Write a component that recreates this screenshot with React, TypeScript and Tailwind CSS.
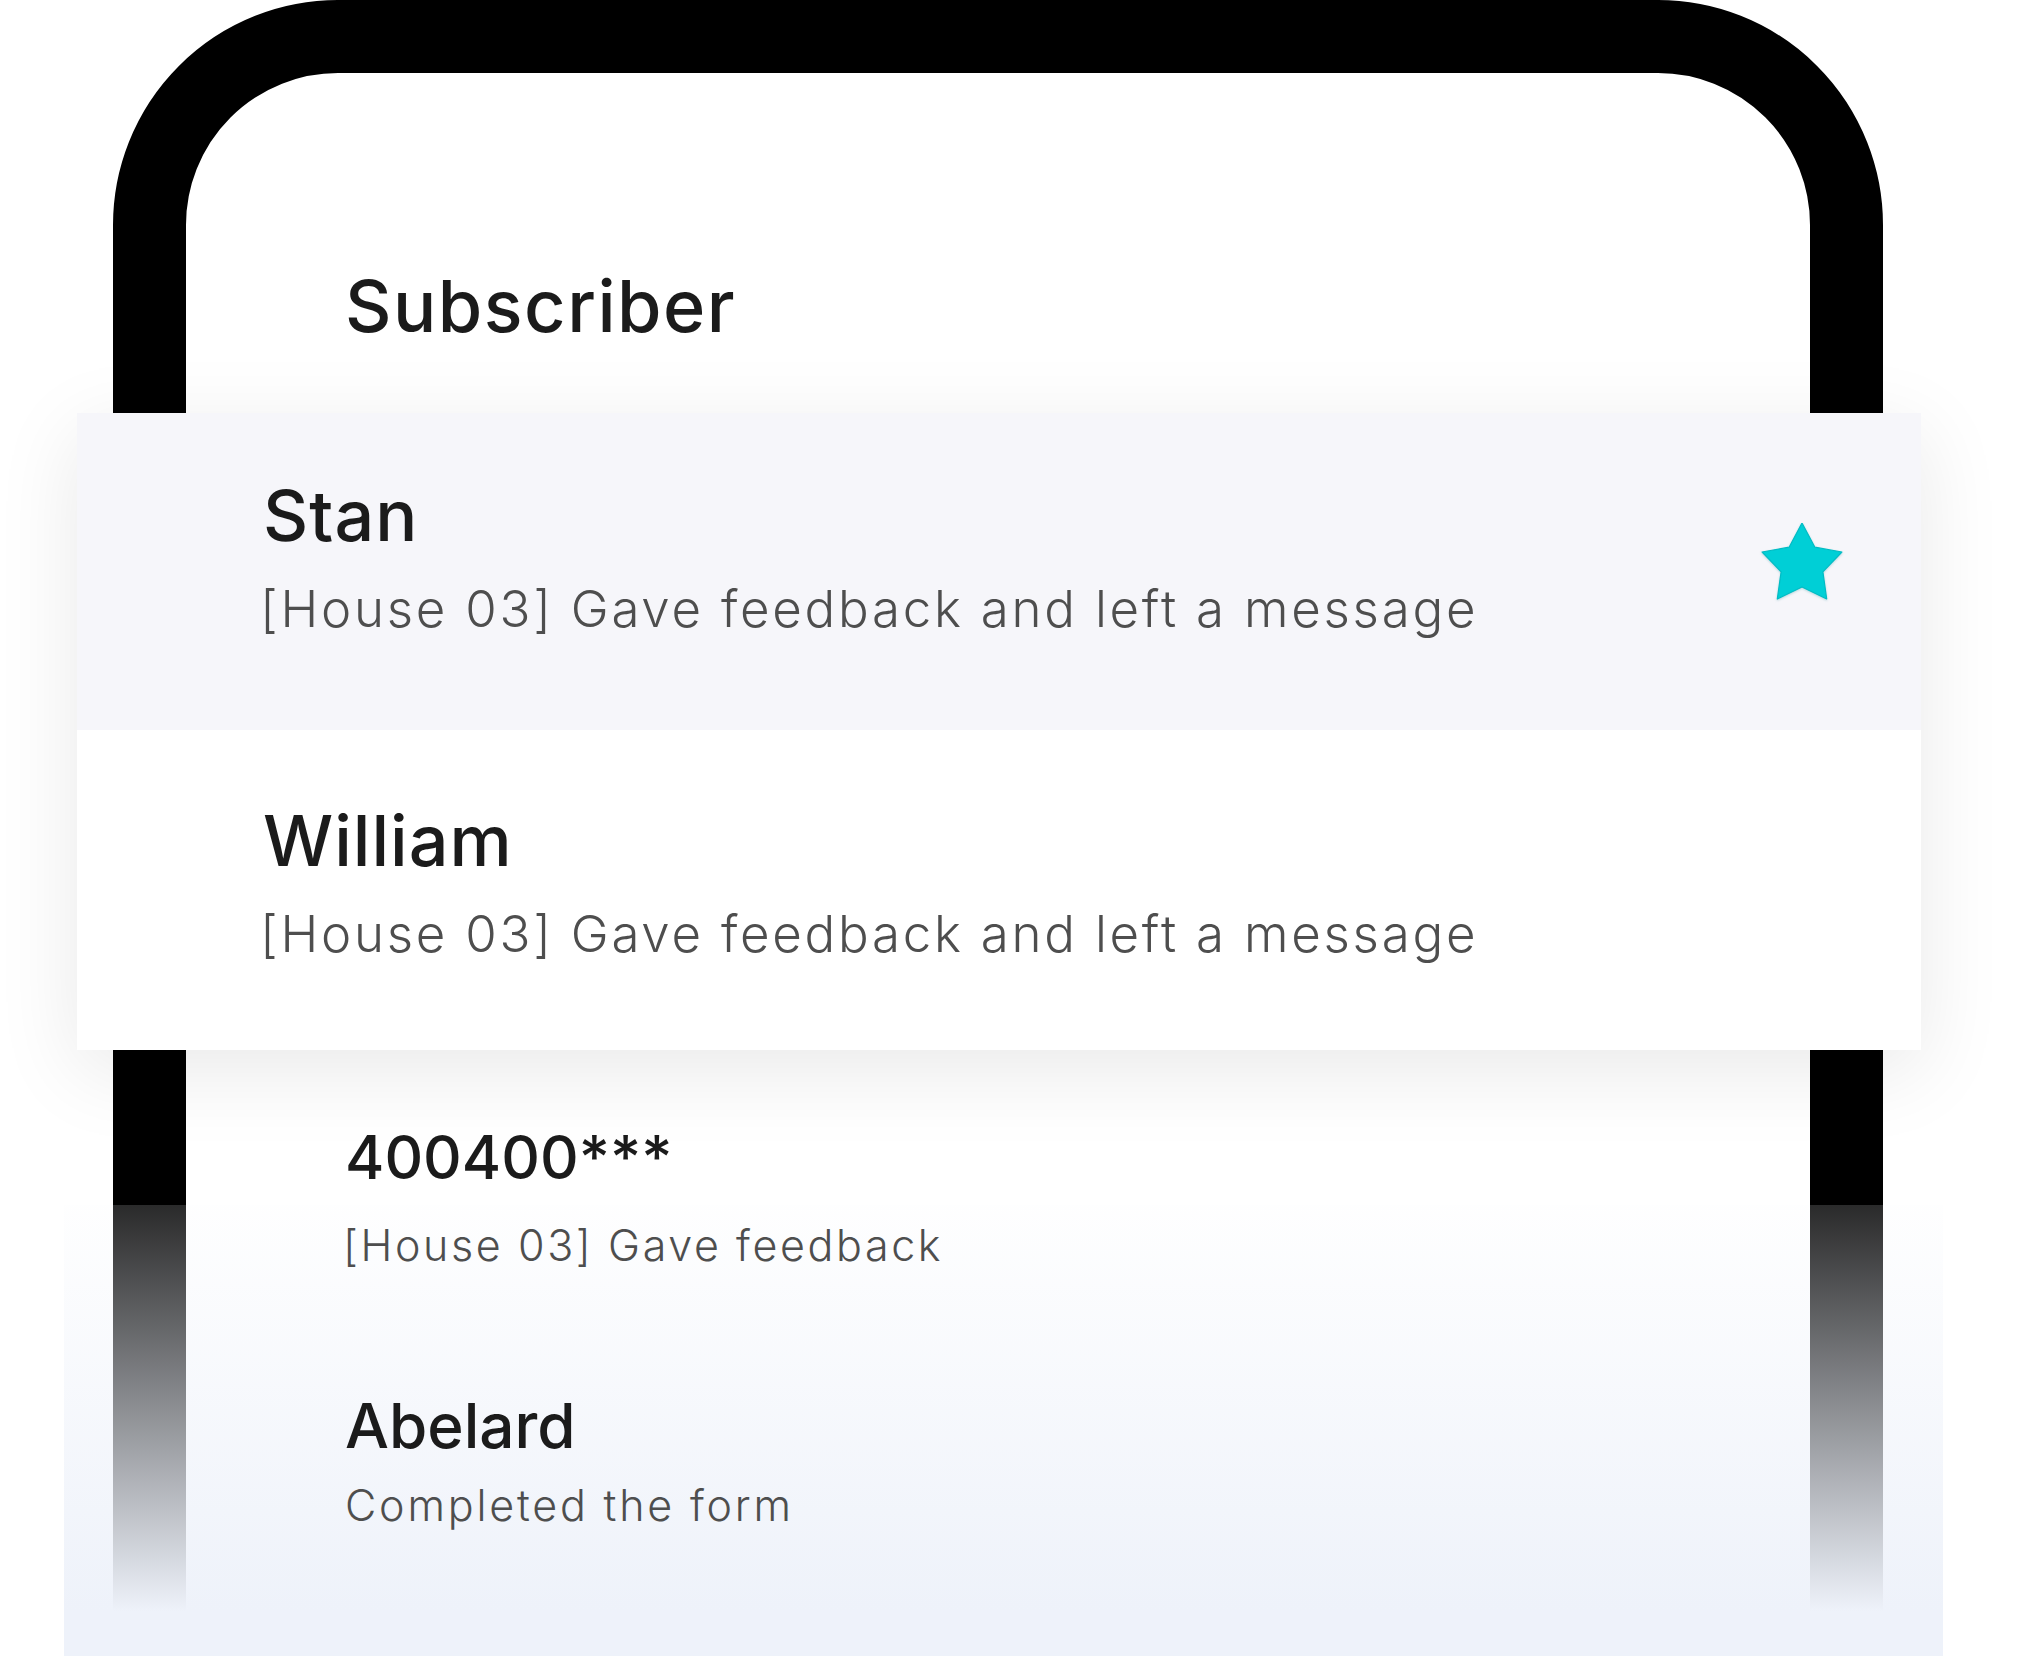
import React from "react";

const cardRows = [
  { name: "Stan", note: "[House 03] Gave feedback and left a message", starred: true },
  { name: "William", note: "[House 03] Gave feedback and left a message", starred: false },
];

const phoneRows = [
  { name: "400400***", note: "[House 03] Gave feedback" },
  { name: "Abelard", note: "Completed the form" },
];

const Star = () => (
  <svg width="84" height="80" viewBox="0 0 84 80" className="drop-shadow-[0_1px_1px_rgba(0,120,130,0.25)]">
    <polygon
      points="42,0 54.9,24.2 81.9,29 62.9,48.8 66.7,76 42,64 17.3,76 21.1,48.8 2.1,29 29.1,24.2"
      fill="#00cfd6"
      stroke="#00bcc4"
      strokeWidth="1.2"
      strokeLinejoin="round"
    />
  </svg>
);

export default function App() {
  return (
    <div className="relative w-[2022px] h-[1656px] overflow-hidden bg-white font-['Inter','Noto_Sans',sans-serif]">
      {/* phone frame */}
      <div className="ml-[113px] w-[1770px] h-[1900px] border-[73px] border-black rounded-[225px] bg-white">
        <div className="relative z-10 pl-[159px] pt-[197px] flex flex-col">
          <h1 className="text-[72px] leading-none font-medium tracking-[1.5px] text-[#1b1b1b]">Subscriber</h1>

          <div className="mt-[785px] flex flex-col">
            <div className="flex flex-col">
              <span className="text-[60px] leading-none font-medium text-[#1b1b1b]">{phoneRows[0].name}</span>
              <span className="mt-[37px] -ml-[2px] text-[43px] leading-none font-light tracking-[2.6px] text-[#4e4e4e]">{phoneRows[0].note}</span>
            </div>
            <div className="mt-[128px] flex flex-col">
              <span className="text-[62px] leading-none font-medium text-[#1b1b1b]">{phoneRows[1].name}</span>
              <span className="mt-[27px] text-[43px] leading-none font-light tracking-[2.8px] text-[#4e4e4e]">{phoneRows[1].note}</span>
            </div>
          </div>
        </div>
      </div>

      {/* fade at the bottom */}
      <div className="absolute left-[64px] top-[1205px] w-[1879px] h-[451px] bg-[linear-gradient(to_bottom,rgba(250,251,253,0.17),rgba(238,242,250,1)_90%)]" />

      {/* zoomed card */}
      <div className="absolute z-20 left-[77px] top-[413px] w-[1844px] flex flex-col bg-white shadow-[0_20px_80px_rgba(0,0,0,0.09)]">
        {cardRows.map((row, i) => (
          <div
            key={row.name}
            className={
              i === 0
                ? "h-[317px] pt-[68px] pl-[186px] pr-[77px] flex justify-between items-start bg-[#f6f6fa]"
                : "h-[320px] pt-[76px] pl-[186px] pr-[77px] flex justify-between items-start bg-white"
            }
          >
            <div className="flex flex-col">
              <span className="text-[70px] leading-none font-medium tracking-[1px] text-[#1b1b1b]">{row.name}</span>
              <span className="mt-[32px] -ml-[3px] text-[51px] leading-none font-light tracking-[2.75px] text-[#4e4e4e]">{row.note}</span>
            </div>
            {row.starred && (
              <div className="mt-[42px]">
                <Star />
              </div>
            )}
          </div>
        ))}
      </div>
    </div>
  );
}
